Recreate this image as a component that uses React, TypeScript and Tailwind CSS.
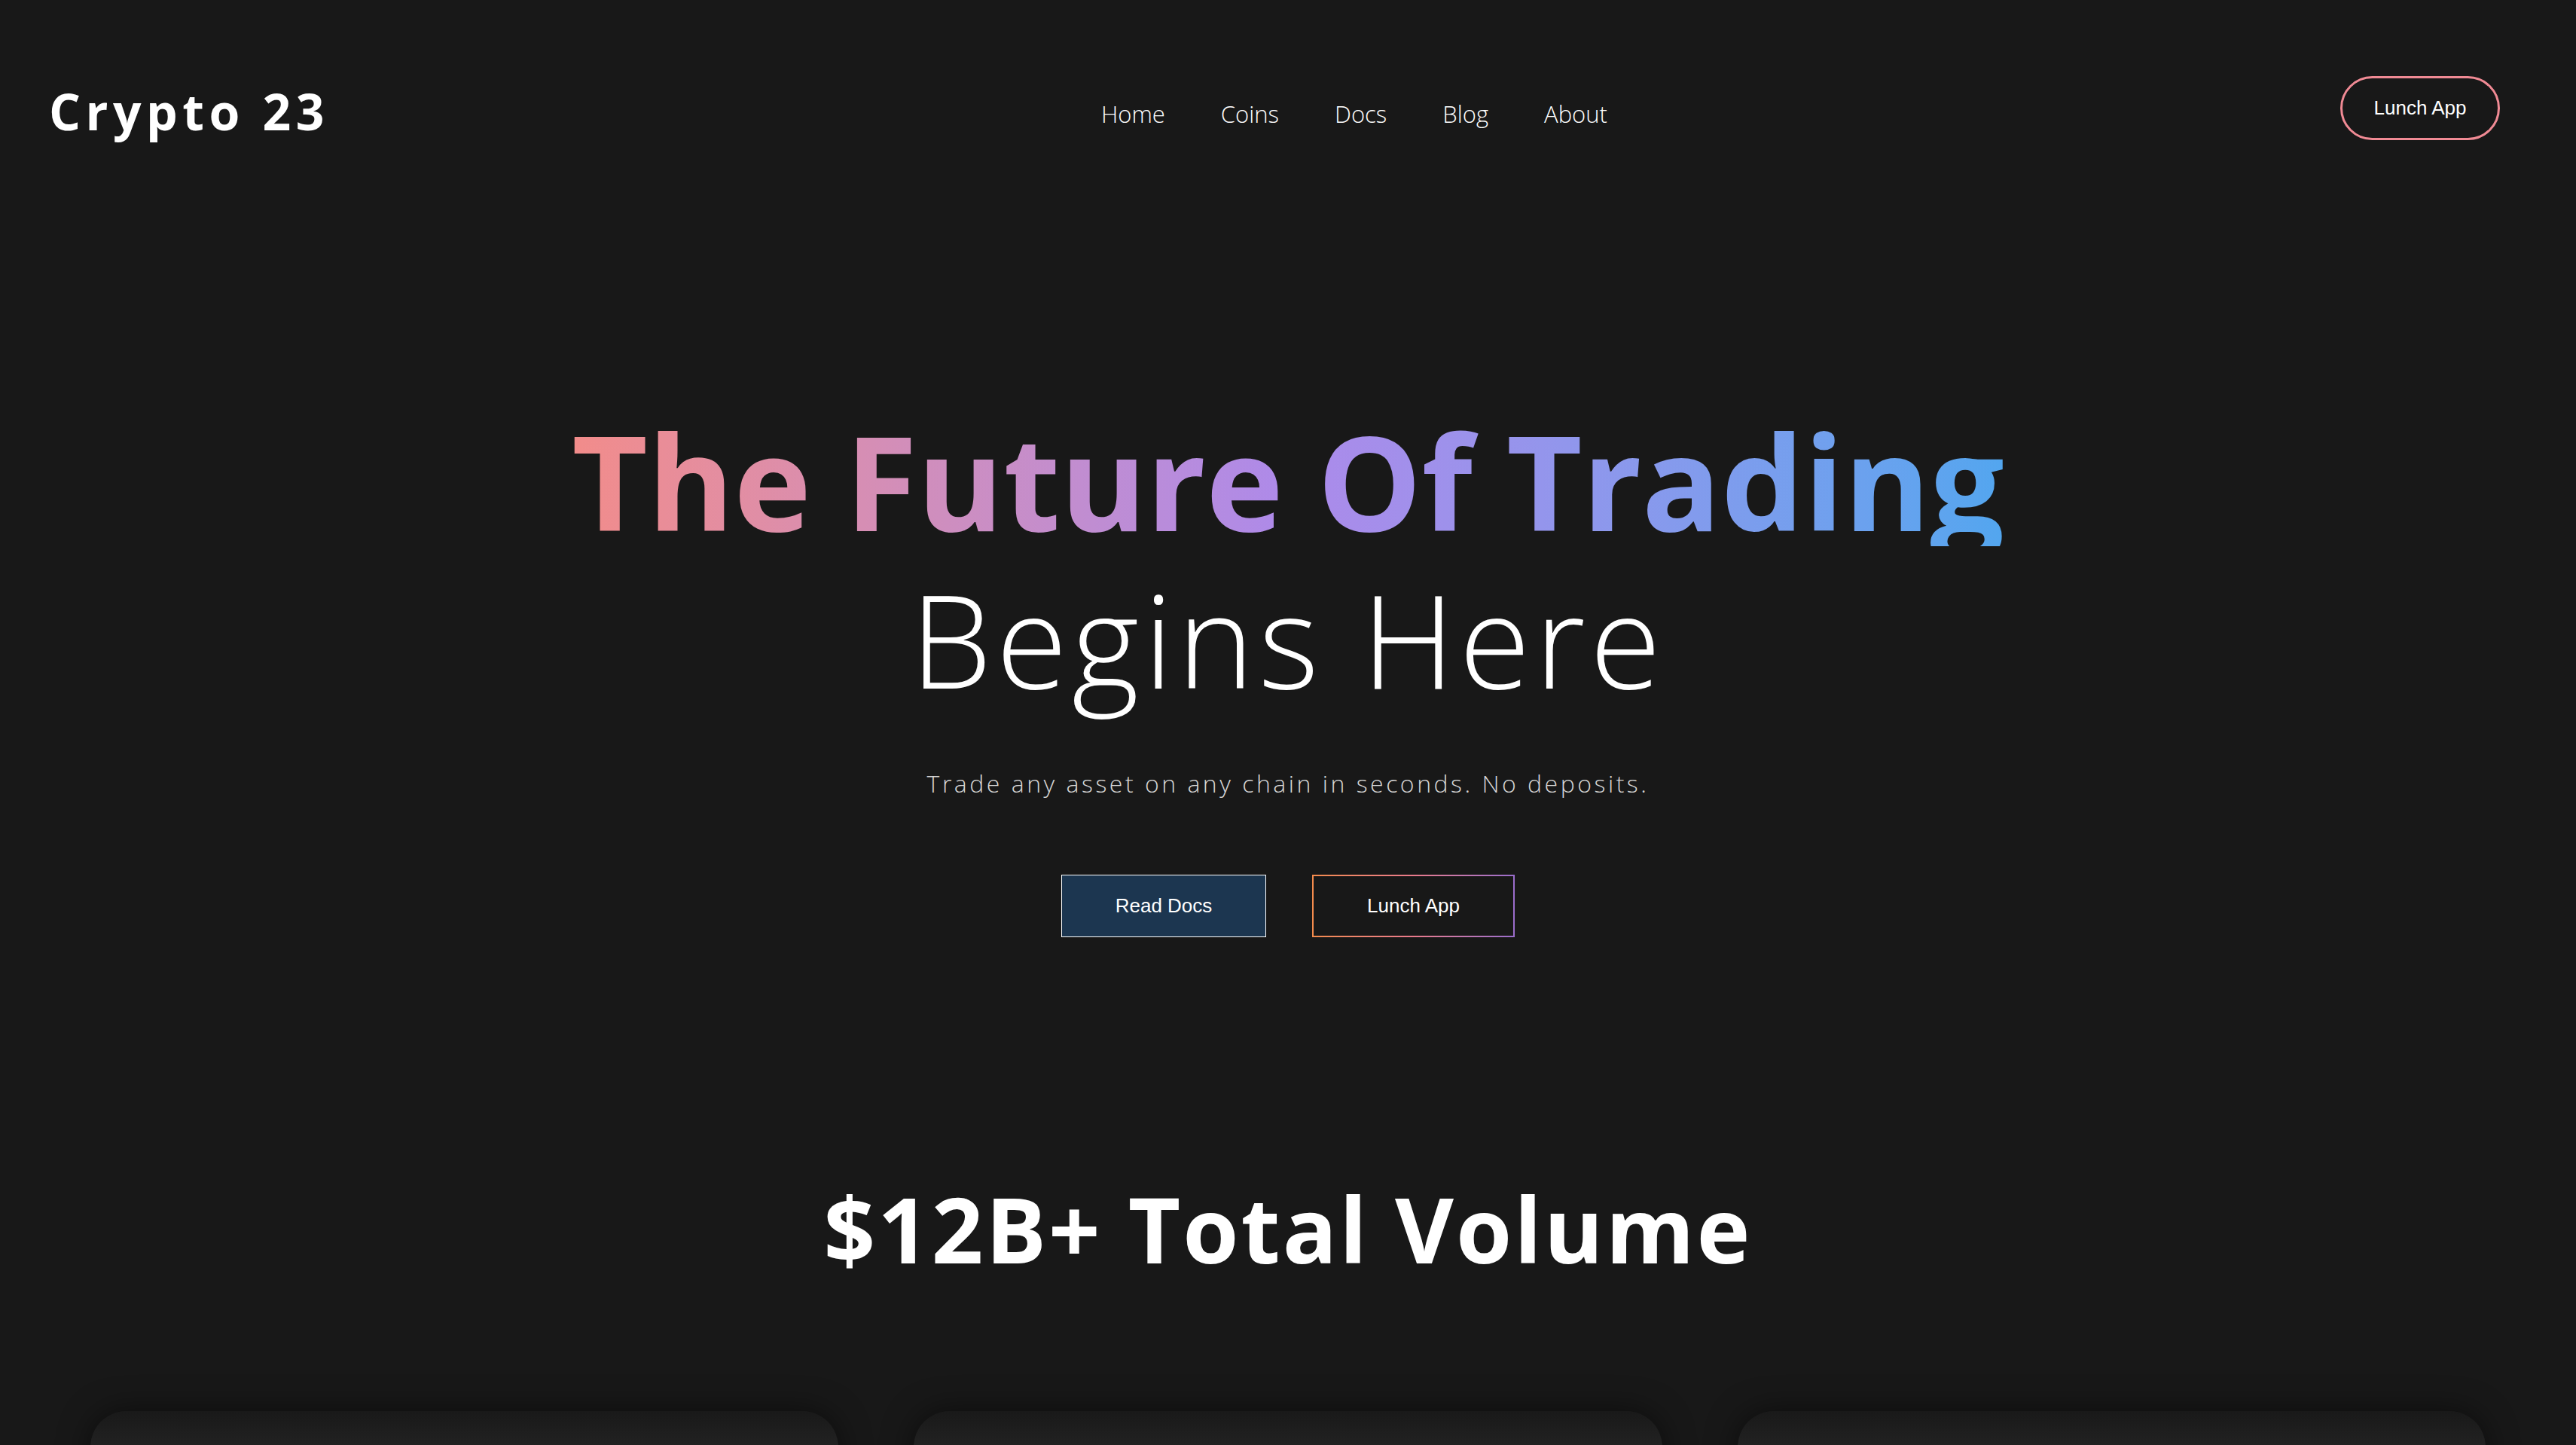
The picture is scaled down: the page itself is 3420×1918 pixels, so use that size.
const links = ["Home", "Coins", "Docs", "Blog", "About"];

export default function App() {
  return (
    <div className="h-[1918px] overflow-hidden bg-[#181818] text-white font-['Open_Sans',sans-serif]">
      {/* top bar */}
      <header className="flex items-center pt-[101px] pl-[65px] pr-[101px]">
        <a className="mt-[6px] text-[66px] leading-none font-bold tracking-[6.5px]">Crypto 23</a>
        <nav className="ml-[1025px] mt-[16px] flex gap-[74px] text-[31px] leading-none font-light">
          {links.map((l) => (
            <a key={l}>{l}</a>
          ))}
        </nav>
        <button className="ml-auto h-[85px] w-[212px] rounded-full border-[3px] border-[#f08a94] font-['Liberation_Sans',sans-serif] text-[26px]">
          Lunch App
        </button>
      </header>

      {/* hero */}
      <section className="flex flex-col items-center pt-[365px]">
        <h1 className="text-center">
          <span className="block text-[174px] leading-none font-bold bg-linear-to-r from-[#f28c8a] via-[#ad8aea] to-[#52a6ef] bg-clip-text text-transparent">
            The Future Of Trading
          </span>
          <span className="block mt-[36px] text-[172px] leading-none font-light tracking-[6px]">Begins Here</span>
        </h1>
        <p className="mt-[91px] text-[32px] leading-none font-light tracking-[3.5px] text-[#d6d6d6]">
          Trade any asset on any chain in seconds. No deposits.
        </p>
        <div className="mt-[105px] flex gap-[61px] font-['Liberation_Sans',sans-serif] text-[26px]">
          <button className="h-[83px] w-[272px] border border-white bg-[#1c3650]">Read Docs</button>
          <div className="h-[83px] w-[269px] p-[2px] bg-linear-to-r from-[#f38b4c] via-[#e97a8b] to-[#9a6dcc]">
            <button className="h-full w-full bg-[#181818]">Lunch App</button>
          </div>
        </div>
        <h2 className="mt-[327px] text-[120px] leading-none font-bold tracking-[3px]">$12B+ Total Volume</h2>
      </section>

      {/* stats cards */}
      <section className="mt-[182px] grid grid-cols-3 gap-[100px] px-[120px]">
        {[0, 1, 2].map((i) => (
          <div
            key={i}
            className="h-[420px] rounded-[48px] bg-linear-to-b from-[#191919] to-[#262626] to-[16%] shadow-[0_0_40px_rgba(0,0,0,0.5)]"
          />
        ))}
      </section>
    </div>
  );
}
